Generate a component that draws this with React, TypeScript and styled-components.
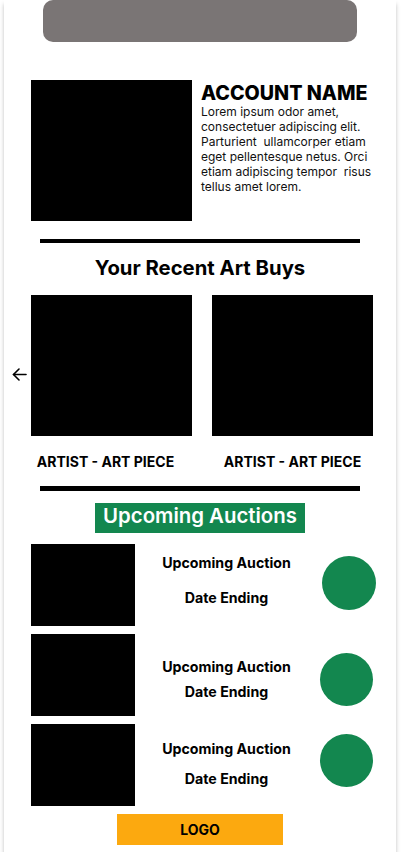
import React from "react";
import styled, { createGlobalStyle } from "styled-components";

const GlobalStyle = createGlobalStyle`
  html, body { margin: 0; padding: 0; background: #ffffff; }
  body { font-family: Inter, "Noto Sans", sans-serif; color: #000; }
  * { box-sizing: border-box; }
`;

const Card = styled.div`
  margin-left: 4px;
  width: 392px;
  height: 852px;
  background: #fff;
  box-shadow: 0 4px 4px rgba(0, 0, 0, 0.25);
  display: flex;
  flex-direction: column;
  align-items: stretch;
`;

const TopBar = styled.div`
  align-self: center;
  width: 314px;
  height: 42px;
  background: #7a7575;
  border-radius: 10px;
`;

const Profile = styled.section`
  margin-top: 38px;
  padding-left: 27px;
  display: flex;
  gap: 9px;
`;

const Block = styled.div<{ $w: number; $h: number }>`
  width: ${(p) => p.$w}px;
  height: ${(p) => p.$h}px;
  background: #000;
  flex-shrink: 0;
`;

const ProfileText = styled.div`
  padding-top: 3px;
  display: flex;
  flex-direction: column;
`;

const AccountName = styled.h1`
  margin: 0;
  font-size: 19.7px;
  line-height: 21px;
  font-weight: 800;
  white-space: nowrap;
`;

const Bio = styled.p`
  margin: 0;
  font-size: 12px;
  line-height: 15px;
  font-weight: 400;
  color: #111;
  white-space: pre-wrap;
`;

const Divider = styled.hr<{ $mt: number; $h: number }>`
  margin: ${(p) => p.$mt}px 0 0 0;
  align-self: center;
  width: 320px;
  height: ${(p) => p.$h}px;
  border: none;
  background: #000;
`;

const SectionTitle = styled.h2`
  margin: 13px 0 0 0;
  text-align: center;
  font-size: 20.3px;
  line-height: 24px;
  font-weight: 650;
`;

const ArtRow = styled.div`
  margin-top: 15px;
  padding-left: 8px;
  display: flex;
`;

const Arrow = styled.svg`
  margin-top: 73px;
  width: 15px;
  height: 13px;
  flex-shrink: 0;
  margin-right: 4px;
`;

const ArtList = styled.div`
  display: flex;
  gap: 20px;
`;

const ArtItem = styled.div`
  display: flex;
  flex-direction: column;
  width: 161px;
`;

const Caption = styled.div<{ $shift: number }>`
  margin-top: 17px;
  font-size: 14px;
  line-height: 17px;
  font-weight: 700;
  text-align: center;
  white-space: nowrap;
  transform: translateX(${(p) => p.$shift}px);
`;

const Badge = styled.h2`
  margin: 12px 0 0 0;
  align-self: center;
  width: 210px;
  height: 30px;
  padding-bottom: 4px;
  background: #13874f;
  color: #fff;
  font-size: 20.4px;
  line-height: 26px;
  font-weight: 600;
  text-align: center;
  white-space: nowrap;
`;

const AuctionList = styled.div`
  margin-top: 11px;
  padding-left: 27px;
  display: flex;
  flex-direction: column;
  gap: 8px;
`;

const AuctionRow = styled.div`
  display: flex;
  height: 82px;
`;

const AuctionText = styled.div<{ $pt: number; $gap: number }>`
  width: 183px;
  padding-top: ${(p) => p.$pt}px;
  display: flex;
  flex-direction: column;
  align-items: center;
  gap: ${(p) => p.$gap}px;
`;

const AuctionLine = styled.div`
  font-size: 14.2px;
  line-height: 17px;
  font-weight: 700;
  white-space: nowrap;
`;

const Dot = styled.div<{ $mt: number; $ml: number; $size: number }>`
  margin-top: ${(p) => p.$mt}px;
  margin-left: ${(p) => p.$ml}px;
  width: ${(p) => p.$size}px;
  height: ${(p) => p.$size}px;
  border-radius: 50%;
  background: #13874f;
  flex-shrink: 0;
`;

const Logo = styled.div`
  margin-top: 8px;
  align-self: center;
  width: 166px;
  height: 31px;
  background: #fca90f;
  display: flex;
  align-items: center;
  justify-content: center;
  font-size: 14px;
  font-weight: 700;
`;

const auctions = [
  { pt: 10, gap: 17.5, mt: 12, ml: 4, size: 54 },
  { pt: 24, gap: 7.5, mt: 19, ml: 2, size: 53 },
  { pt: 16, gap: 12.5, mt: 10, ml: 2, size: 53 },
];

export default function App() {
  return (
    <>
      <GlobalStyle />
      <Card>
        <TopBar />
        <Profile>
          <Block $w={161} $h={141} />
          <ProfileText>
            <AccountName>ACCOUNT NAME</AccountName>
            <Bio>
              {"Lorem ipsum odor amet,\nconsectetuer adipiscing elit.\nParturient  ullamcorper etiam\neget pellentesque netus. Orci\netiam adipiscing tempor  risus\ntellus amet lorem."}
            </Bio>
          </ProfileText>
        </Profile>
        <Divider $mt={18} $h={4} />
        <SectionTitle>Your Recent Art Buys</SectionTitle>
        <ArtRow>
          <Arrow viewBox="0 0 15 13" fill="none" stroke="#000" strokeWidth="1.6" strokeLinecap="round" strokeLinejoin="round">
            <path d="M14 6.5H1.5" />
            <path d="M7 1L1.5 6.5L7 12" />
          </Arrow>
          <ArtList>
            <ArtItem>
              <Block $w={161} $h={141} />
              <Caption $shift={-6}>ARTIST - ART PIECE</Caption>
            </ArtItem>
            <ArtItem>
              <Block $w={161} $h={141} />
              <Caption $shift={0}>ARTIST - ART PIECE</Caption>
            </ArtItem>
          </ArtList>
        </ArtRow>
        <Divider $mt={16} $h={5} />
        <Badge>Upcoming Auctions</Badge>
        <AuctionList>
          {auctions.map((a, i) => (
            <AuctionRow key={i}>
              <Block $w={104} $h={82} />
              <AuctionText $pt={a.pt} $gap={a.gap}>
                <AuctionLine>Upcoming Auction</AuctionLine>
                <AuctionLine>Date Ending</AuctionLine>
              </AuctionText>
              <Dot $mt={a.mt} $ml={a.ml} $size={a.size} />
            </AuctionRow>
          ))}
        </AuctionList>
        <Logo>LOGO</Logo>
      </Card>
    </>
  );
}
